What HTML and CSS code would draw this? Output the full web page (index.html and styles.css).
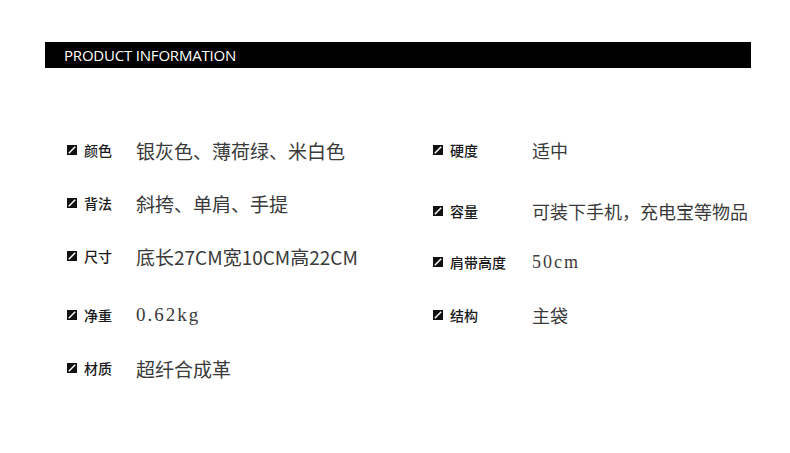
FILE: index.html
```html
<!DOCTYPE html>
<html lang="zh-CN">
<head>
    <meta charset="UTF-8">
    <meta name="viewport" content="width=device-width, initial-scale=1.0">
    <title>Product Information</title>
    <link rel="stylesheet" href="styles.css">
</head>
<body>
    <!-- Title bar -->
    <div class="title-bar">PRODUCT INFORMATION</div>

    <div class="specs">
        <!-- Left column -->
        <div class="spec-col spec-left">
            <div class="spec-row">
                <svg class="mark" viewBox="0 0 10 10"><rect width="10" height="10" fill="#111"/><line x1="1.8" y1="8.2" x2="8.2" y2="1.8" stroke="#fff" stroke-width="1.5"/></svg>
                <span class="label">颜色</span>
                <span class="value">银灰色、薄荷绿、米白色</span>
            </div>
            <div class="spec-row">
                <svg class="mark" viewBox="0 0 10 10"><rect width="10" height="10" fill="#111"/><line x1="1.8" y1="8.2" x2="8.2" y2="1.8" stroke="#fff" stroke-width="1.5"/></svg>
                <span class="label">背法</span>
                <span class="value">斜挎、单肩、手提</span>
            </div>
            <div class="spec-row">
                <svg class="mark" viewBox="0 0 10 10"><rect width="10" height="10" fill="#111"/><line x1="1.8" y1="8.2" x2="8.2" y2="1.8" stroke="#fff" stroke-width="1.5"/></svg>
                <span class="label">尺寸</span>
                <span class="value">底长27CM宽10CM高22CM</span>
            </div>
            <div class="spec-row">
                <svg class="mark" viewBox="0 0 10 10"><rect width="10" height="10" fill="#111"/><line x1="1.8" y1="8.2" x2="8.2" y2="1.8" stroke="#fff" stroke-width="1.5"/></svg>
                <span class="label">净重</span>
                <span class="value serif">0.62kg</span>
            </div>
            <div class="spec-row">
                <svg class="mark" viewBox="0 0 10 10"><rect width="10" height="10" fill="#111"/><line x1="1.8" y1="8.2" x2="8.2" y2="1.8" stroke="#fff" stroke-width="1.5"/></svg>
                <span class="label">材质</span>
                <span class="value">超纤合成革</span>
            </div>
        </div>

        <!-- Right column -->
        <div class="spec-col spec-right">
            <div class="spec-row">
                <svg class="mark" viewBox="0 0 10 10"><rect width="10" height="10" fill="#111"/><line x1="1.8" y1="8.2" x2="8.2" y2="1.8" stroke="#fff" stroke-width="1.5"/></svg>
                <span class="label">硬度</span>
                <span class="value">适中</span>
            </div>
            <div class="spec-row">
                <svg class="mark" viewBox="0 0 10 10"><rect width="10" height="10" fill="#111"/><line x1="1.8" y1="8.2" x2="8.2" y2="1.8" stroke="#fff" stroke-width="1.5"/></svg>
                <span class="label">容量</span>
                <span class="value">可装下手机，充电宝等物品</span>
            </div>
            <div class="spec-row">
                <svg class="mark" viewBox="0 0 10 10"><rect width="10" height="10" fill="#111"/><line x1="1.8" y1="8.2" x2="8.2" y2="1.8" stroke="#fff" stroke-width="1.5"/></svg>
                <span class="label">肩带高度</span>
                <span class="value serif">50cm</span>
            </div>
            <div class="spec-row">
                <svg class="mark" viewBox="0 0 10 10"><rect width="10" height="10" fill="#111"/><line x1="1.8" y1="8.2" x2="8.2" y2="1.8" stroke="#fff" stroke-width="1.5"/></svg>
                <span class="label">结构</span>
                <span class="value">主袋</span>
            </div>
        </div>
    </div>
</body>
</html>
```

FILE: styles.css
```css
/* Page */
body {
    margin: 0;
    background-color: #ffffff;
    font-family: "Noto Sans CJK SC", "Noto Sans", sans-serif;
    color: #333;
}

/* Black title bar */
.title-bar {
    margin: 42px 0 0 45px;
    width: 706px;
    height: 26px;
    box-sizing: border-box;
    padding-left: 19px;
    background-color: #000;
    color: #fff;
    font-family: "Open Sans", "Liberation Sans", sans-serif;
    font-size: 15px;
    line-height: 26px;
    letter-spacing: -0.2px;
}

/* Two spec columns */
.specs {
    display: grid;
    grid-template-columns: 366px 1fr;
    margin-top: 69px;
    padding-left: 67px;
}

.spec-col {
    display: flex;
    flex-direction: column;
}

.spec-row {
    display: flex;
    align-items: center;
    height: 26px;
}

.spec-left .spec-row:nth-child(2) { margin-top: 27px; }
.spec-left .spec-row:nth-child(3) { margin-top: 27px; }
.spec-left .spec-row:nth-child(4) { margin-top: 33px; }
.spec-left .spec-row:nth-child(5) { margin-top: 27px; }

.spec-right .spec-row:nth-child(2) { margin-top: 35px; }
.spec-right .spec-row:nth-child(3) { margin-top: 25px; }
.spec-right .spec-row:nth-child(4) { margin-top: 27px; }

/* Small square marker */
.mark {
    width: 10px;
    height: 10px;
    flex: none;
    margin-right: 7px;
}

.label {
    flex: none;
    font-size: 14px;
    font-weight: 500;
    color: #1a1a1a;
}

.spec-left .label { width: 52px; }
.spec-right .label { width: 82px; }

.value {
    font-size: 19px;
    color: #3a3a3a;
    white-space: nowrap;
}

.spec-right .value { font-size: 18px; }

/* numbers set in a serif face, spaced out */
.value.serif {
    font-family: "Liberation Serif", serif;
    letter-spacing: 2px;
}
```
